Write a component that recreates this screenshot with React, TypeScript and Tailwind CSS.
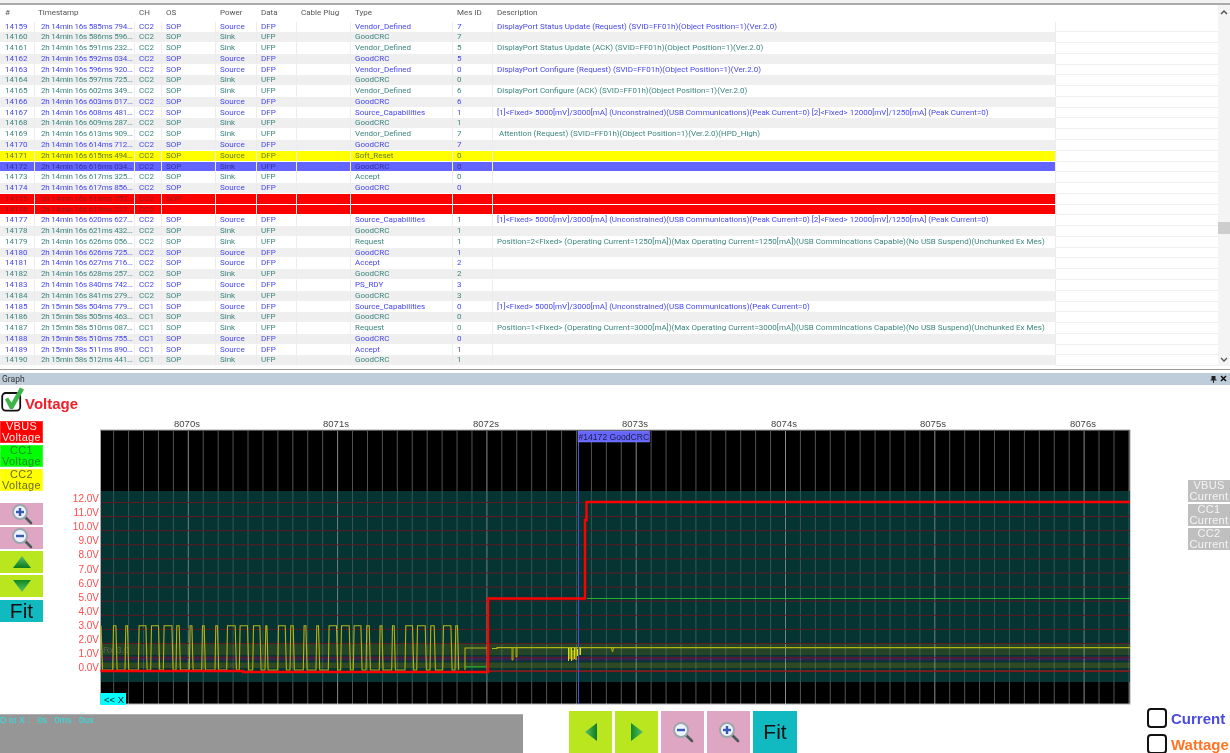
import React from 'react';

type Row = {
  id: number;
  time: string;
  ch?: string;
  os?: string;
  side?: 'Source' | 'Sink';
  type?: string;
  mes?: number;
  desc?: string;
  mark?: 'yellow' | 'blue' | 'red';
};

const caps12 = '[1]<Fixed> 5000[mV]/3000[mA] (Unconstrained)(USB Communications)(Peak Current=0) [2]<Fixed> 12000[mV]/1250[mA] (Peak Current=0)';

const rows: Row[] = [
  { id: 14159, time: '2h 14min 16s 585ms 794...', side: 'Source', type: 'Vendor_Defined', mes: 7, desc: 'DisplayPort Status Update (Request) (SVID=FF01h)(Object Position=1)(Ver.2.0)' },
  { id: 14160, time: '2h 14min 16s 586ms 596...', side: 'Sink', type: 'GoodCRC', mes: 7 },
  { id: 14161, time: '2h 14min 16s 591ms 232...', side: 'Sink', type: 'Vendor_Defined', mes: 5, desc: 'DisplayPort Status Update (ACK) (SVID=FF01h)(Object Position=1)(Ver.2.0)' },
  { id: 14162, time: '2h 14min 16s 592ms 034...', side: 'Source', type: 'GoodCRC', mes: 5 },
  { id: 14163, time: '2h 14min 16s 596ms 920...', side: 'Source', type: 'Vendor_Defined', mes: 0, desc: 'DisplayPort Configure (Request) (SVID=FF01h)(Object Position=1)(Ver.2.0)' },
  { id: 14164, time: '2h 14min 16s 597ms 725...', side: 'Sink', type: 'GoodCRC', mes: 0 },
  { id: 14165, time: '2h 14min 16s 602ms 349...', side: 'Sink', type: 'Vendor_Defined', mes: 6, desc: 'DisplayPort Configure (ACK) (SVID=FF01h)(Object Position=1)(Ver.2.0)' },
  { id: 14166, time: '2h 14min 16s 603ms 017...', side: 'Source', type: 'GoodCRC', mes: 6 },
  { id: 14167, time: '2h 14min 16s 608ms 481...', side: 'Source', type: 'Source_Capabilities', mes: 1, desc: caps12 },
  { id: 14168, time: '2h 14min 16s 609ms 287...', side: 'Sink', type: 'GoodCRC', mes: 1 },
  { id: 14169, time: '2h 14min 16s 613ms 909...', side: 'Sink', type: 'Vendor_Defined', mes: 7, desc: '\u00a0Attention (Request) (SVID=FF01h)(Object Position=1)(Ver.2.0)(HPD_High)' },
  { id: 14170, time: '2h 14min 16s 614ms 712...', side: 'Source', type: 'GoodCRC', mes: 7 },
  { id: 14171, time: '2h 14min 16s 615ms 494...', side: 'Source', type: 'Soft_Reset', mes: 0, mark: 'yellow' },
  { id: 14172, time: '2h 14min 16s 616ms 034...', side: 'Sink', type: 'GoodCRC', mes: 0, mark: 'blue' },
  { id: 14173, time: '2h 14min 16s 617ms 325...', side: 'Sink', type: 'Accept', mes: 0 },
  { id: 14174, time: '2h 14min 16s 617ms 856...', side: 'Source', type: 'GoodCRC', mes: 0 },
  { id: 14175, time: '2h 14min 16s 618ms 752...', ch: 'CC2', os: 'SOP', mark: 'red' },
  { id: 14176, time: '2h 14min 16s 619ms 227...', ch: 'CC2', os: '', mark: 'red' },
  { id: 14177, time: '2h 14min 16s 620ms 627...', side: 'Source', type: 'Source_Capabilities', mes: 1, desc: caps12 },
  { id: 14178, time: '2h 14min 16s 621ms 432...', side: 'Sink', type: 'GoodCRC', mes: 1 },
  { id: 14179, time: '2h 14min 16s 626ms 056...', side: 'Sink', type: 'Request', mes: 1, desc: 'Position=2<Fixed> (Operating Current=1250[mA])(Max Operating Current=1250[mA])(USB Commincations Capable)(No USB Suspend)(Unchunked Ex Mes)' },
  { id: 14180, time: '2h 14min 16s 626ms 725...', side: 'Source', type: 'GoodCRC', mes: 1 },
  { id: 14181, time: '2h 14min 16s 627ms 716...', side: 'Source', type: 'Accept', mes: 2 },
  { id: 14182, time: '2h 14min 16s 628ms 257...', side: 'Sink', type: 'GoodCRC', mes: 2 },
  { id: 14183, time: '2h 14min 16s 840ms 742...', side: 'Source', type: 'PS_RDY', mes: 3 },
  { id: 14184, time: '2h 14min 16s 841ms 279...', side: 'Sink', type: 'GoodCRC', mes: 3 },
  { id: 14185, time: '2h 15min 58s 504ms 779...', ch: 'CC1', side: 'Source', type: 'Source_Capabilities', mes: 0, desc: '[1]<Fixed> 5000[mV]/3000[mA] (Unconstrained)(USB Communications)(Peak Current=0)' },
  { id: 14186, time: '2h 15min 58s 505ms 463...', ch: 'CC1', side: 'Sink', type: 'GoodCRC', mes: 0 },
  { id: 14187, time: '2h 15min 58s 510ms 087...', ch: 'CC1', side: 'Sink', type: 'Request', mes: 0, desc: 'Position=1<Fixed> (Operating Current=3000[mA])(Max Operating Current=3000[mA])(USB Commincations Capable)(No USB Suspend)(Unchunked Ex Mes)' },
  { id: 14188, time: '2h 15min 58s 510ms 755...', ch: 'CC1', side: 'Source', type: 'GoodCRC', mes: 0 },
  { id: 14189, time: '2h 15min 58s 511ms 890...', ch: 'CC1', side: 'Source', type: 'Accept', mes: 1 },
  { id: 14190, time: '2h 15min 58s 512ms 441...', ch: 'CC1', side: 'Sink', type: 'GoodCRC', mes: 1 },
];

const cols = 'grid grid-cols-[35px_100px_27px_54px_41px_40px_54px_102px_40px_563px_162px]';

const Cell = ({ children, className = '' }: { children?: React.ReactNode; className?: string }) => (
  <div className={`overflow-hidden whitespace-nowrap border-r border-b border-r-[#ececec] border-b-white leading-[10px] ${className}`}>{children}</div>
);

const TableRow = ({ row }: { row: Row }) => {
  const even = row.id % 2 === 0;
  let bg = even ? 'bg-[#efefef]' : 'bg-white';
  let text = row.side === 'Source' ? 'text-[#4646f0]' : 'text-[#3c8580]';
  if (row.mark === 'yellow') { bg = 'bg-[#ffff00]'; text = 'text-[#5c7a30]'; }
  if (row.mark === 'blue') { bg = 'bg-[#6464ff]'; text = 'text-[#33339c]'; }
  if (row.mark === 'red') { bg = 'bg-[#ff0000]'; text = 'text-[#8e1c1c]'; }
  return (
    <div className={`${cols} h-[10.77px] ${text}`}>
      <Cell className={`${bg} pl-[5px]`}>{row.id}</Cell>
      <Cell className={`${bg} pl-[6px] tracking-[-0.2px]`}>{row.time}</Cell>
      <Cell className={`${bg} pl-[4px]`}>{row.ch ?? 'CC2'}</Cell>
      <Cell className={`${bg} pl-[4px]`}>{row.os ?? 'SOP'}</Cell>
      <Cell className={`${bg} pl-[4px]`}>{row.side}</Cell>
      <Cell className={`${bg} pl-[4px]`}>{row.side ? (row.side === 'Source' ? 'DFP' : 'UFP') : ''}</Cell>
      <Cell className={bg} />
      <Cell className={`${bg} pl-[4px]`}>{row.type}</Cell>
      <Cell className={`${bg} pl-[4px]`}>{row.mes}</Cell>
      <Cell className={`${bg} pl-[4px]`}>{row.desc}</Cell>
      <div className="bg-white border-b border-[#f0f0f0]" />
    </div>
  );
};

const Magnifier = ({ plus }: { plus: boolean }) => (
  <svg width="22" height="22" viewBox="0 0 22 22">
    <line x1="13.5" y1="13.5" x2="20" y2="20" stroke="#4a5a58" strokeWidth="2.6" strokeLinecap="round" />
    <circle cx="9" cy="9" r="7" fill="#eef3fb" stroke="#9aa7ad" strokeWidth="2" />
    <rect x="5" y="7.8" width="8" height="2.4" fill="#3858b8" />
    {plus && <rect x="7.8" y="5" width="2.4" height="8" fill="#3858b8" />}
  </svg>
);

const Triangle = ({ dir }: { dir: 'up' | 'down' | 'left' | 'right' }) => {
  const points = {
    up: '11,1 20,13 2,13',
    down: '2,1 20,1 11,13',
    left: '13,1 13,19 1,10',
    right: '1,1 1,19 13,10',
  }[dir];
  const vertical = dir === 'up' || dir === 'down';
  return (
    <svg width={vertical ? 22 : 14} height={vertical ? 14 : 20} viewBox={vertical ? '0 0 22 14' : '0 0 14 20'}>
      <defs>
        <linearGradient id={`tri-${dir}`} x1="0" y1="0" x2={vertical ? '0' : '1'} y2={vertical ? '1' : '0'}>
          <stop offset="0" stopColor={dir === 'down' || dir === 'right' ? '#0e8a1e' : '#5cc06a'} />
          <stop offset="1" stopColor={dir === 'down' || dir === 'right' ? '#5cc06a' : '#0e7a1c'} />
        </linearGradient>
      </defs>
      <polygon points={points} fill={`url(#tri-${dir})`} />
    </svg>
  );
};

const CheckedBox = () => (
  <svg width="24" height="26" viewBox="0 0 24 26" className="shrink-0">
    <rect x="1.2" y="7" width="18" height="17.6" rx="3.5" fill="white" stroke="#111" strokeWidth="1.8" />
    <path d="M4 13.5 L7 11.5 L10.5 16.5 L19 1.5 L23 3.5 L12 23 L9 23 Z" fill="#3cb44a" />
  </svg>
);

const pulses: [number, number][] = [
  [38, 50], [75, 85], [115, 140], [152, 178], [190, 218], [228, 240], [268, 278], [305, 315], [345, 355], [380, 408],
  [418, 445], [458, 482], [495, 503], [533, 558], [570, 582], [610, 620], [648, 658], [685, 712], [722, 750], [760, 785],
  [798, 810], [838, 848], [875, 885], [915, 940], [950, 978], [990, 1005], [1028, 1055], [1065, 1075],
];

const wave = () => {
  const hi = 625.7;
  const lo = 670;
  let d = `M101 ${hi} L102.5 ${lo}`;
  for (const [a, b] of pulses) {
    const x1 = 100 + a / 3;
    const x2 = 100 + b / 3;
    d += ` L${x1.toFixed(1)} ${lo} L${(x1 + 0.8).toFixed(1)} ${hi} L${(x2 - 0.8).toFixed(1)} ${hi} L${(x2 + 0.4).toFixed(1)} ${lo}`;
  }
  return d;
};

const gridX: { x: number; major: boolean }[] = [];
for (let k = -5; k < 64; k++) {
  gridX.push({ x: 188.3 + k * 14.93, major: k % 10 === 0 });
}
const volts = Array.from({ length: 13 }, (_, i) => 12 - i);
const ticks = [[187, '8070s'], [336, '8071s'], [486, '8072s'], [635, '8073s'], [784, '8074s'], [933, '8075s'], [1083, '8076s']] as const;

const Chart = () => (
  <svg width="1090" height="288" viewBox="44 417 1090 288" className="block shrink-0 font-['Liberation_Sans',sans-serif]">
    <rect x="100.5" y="430" width="1029.5" height="274" fill="#000" stroke="#aaa" strokeWidth="1" />
    <rect x="101" y="491" width="1029" height="191" fill="#063432" />
    {/* bands behind the traces */}
    <rect x="101" y="643" width="1029" height="12" fill="#6d6a10" opacity="0.3" />
    <rect x="101" y="656.5" width="1029" height="4" fill="#6a1470" opacity="0.5" />
    <rect x="101" y="662.5" width="1029" height="5.5" fill="#6d6a10" opacity="0.4" />
    {gridX.map(g => (
      <g key={g.x}>
        <line x1={g.x} x2={g.x} y1="431" y2="491" stroke="#fff" strokeOpacity={g.major ? 0.55 : 0.33} />
        <line x1={g.x} x2={g.x} y1="491" y2="682" stroke="#fff" strokeOpacity={g.major ? 0.4 : 0.18} />
        <line x1={g.x} x2={g.x} y1="682" y2="704" stroke="#fff" strokeOpacity={g.major ? 0.55 : 0.33} />
      </g>
    ))}
    {volts.map(v => {
      const y = 502.5 + (12 - v) * 14.1;
      return (
        <g key={v}>
          <line x1="101" x2="1130" y1={y} y2={y} stroke="#5e1a20" strokeWidth="1" />
          <text x="99" y={y - 0.5} textAnchor="end" fontSize="10" fill="#ff4a4a">{v.toFixed(1)}V</text>
        </g>
      );
    })}
    {ticks.map(([x, label]) => (
      <text key={label} x={x} y="427" textAnchor="middle" fontSize="9.5" fill="#444">{label}</text>
    ))}
    <text x="103" y="653" fontSize="9" fill="#888" opacity="0.45">Rx 3.0</text>

    <path d="M488 671 H1130" stroke="#c01414" strokeWidth="1.2" fill="none" />
    <path d="M587 598.5 H1130" stroke="#22b030" strokeWidth="1.2" fill="none" />
    <path d="M465 666.8 H488" stroke="#20b030" strokeWidth="1.2" fill="none" />
    <path d={wave()} stroke="#b4b414" strokeWidth="1.1" fill="none" />
    <path d="M465 670 V648 H488 M492 648.5 H497 V647.6 H1130" stroke="#b4b414" strokeWidth="1.1" fill="none" />
    <path d="M512 648 V660 H513 V648 M516 648 V657 H517 V648" stroke="#a8a810" strokeWidth="1" fill="none" />
    <path d="M568.5 648 V661 M570 648 V659 M571.5 648 V661 M573 650 V660 M574.5 648 V659 M576 648 V660 M577.5 649 V656 M579 648 V655 M580.5 648 V655" stroke="#e0e000" strokeWidth="1" fill="none" />
    <path d="M611.5 648 L612.5 652 L613.5 648" stroke="#b4b414" strokeWidth="1" fill="none" />

    <line x1="578.5" x2="578.5" y1="431" y2="704" stroke="#4454d0" strokeWidth="1" />
    <path d="M100.5 671 H243 V672 H488 V598.5 H585 V520 H586.5 V502 H1130" stroke="#f00" strokeWidth="2.4" fill="none" />

    <rect x="578" y="431" width="71.5" height="11" fill="#6666ff" stroke="#8a8aff" strokeWidth="0.5" />
    <text x="578.5" y="440" fontSize="8.6" fill="#20204a">#14172 GoodCRC</text>
    <rect x="100.5" y="693" width="25.5" height="12" fill="#00ffff" />
    <text x="104" y="702.5" fontSize="9.5" fill="#222">{'<< X'}</text>
  </svg>
);

const sideLabel = "w-[43px] h-[22px] flex flex-col items-center justify-center text-[11px] leading-[10.5px] tracking-[0.3px] border border-white/20";

export default function App() {
  return (
    <div className="w-[1230px] h-[753px] overflow-hidden bg-white font-['Roboto',sans-serif] blur-[0.3px]">
      <div className="h-[5px] bg-[#f2f2f2] border-b-2 border-[#aaa]" />
      <div className="flex h-[361.2px] text-[8px]">
        <div className="w-[1218px] shrink-0">
          <div className={`${cols} h-[16.6px] items-center text-[#555]`}>
            <div className="pl-[5px]">#</div>
            <div className="pl-[3px]">Timestamp</div>
            <div className="pl-[4px]">CH</div>
            <div className="pl-[4px]">OS</div>
            <div className="pl-[4px]">Power</div>
            <div className="pl-[4px]">Data</div>
            <div className="pl-[4px]">Cable Plug</div>
            <div className="pl-[4px]">Type</div>
            <div className="pl-[4px]">Mes ID</div>
            <div className="pl-[4px]">Description</div>
            <div />
          </div>
          {rows.map(r => <TableRow key={r.id} row={r} />)}
        </div>
        <div className="w-[12px] bg-[#f4f4f4] flex flex-col items-center">
          <div className="h-[217px] pt-[4px] leading-none">
            <svg width="8" height="6" viewBox="0 0 8 6"><path d="M1 5 L4 2 L7 5" stroke="#555" strokeWidth="1.5" fill="none" /></svg>
          </div>
          <div className="w-full h-[12px] bg-[#cdcdcd]" />
          <div className="mt-auto mb-[3px] leading-none">
            <svg width="8" height="6" viewBox="0 0 8 6"><path d="M1 1 L4 4 L7 1" stroke="#555" strokeWidth="1.3" fill="none" /></svg>
          </div>
        </div>
      </div>
      <div className="h-[6.8px] pt-[2.4px]">
        <div className="h-[1.5px] bg-[#999]" />
      </div>
      <div className="h-[12px] bg-[#bfcddb] flex items-center pl-[2px] pr-[3px] text-[8.5px] text-[#333]">
        <span>Graph</span>
        <svg className="ml-auto" width="7" height="8" viewBox="0 0 7 8"><path d="M1.5 1 H5.5 V4.5 H6.5 V5.5 H4 V8 H3 V5.5 H.5 V4.5 H1.5 Z" fill="#222" /></svg>
        <svg className="ml-[3px]" width="7" height="7" viewBox="0 0 7 7"><path d="M1 1 L6 6 M6 1 L1 6" stroke="#111" strokeWidth="1.5" /></svg>
      </div>

      <div className="h-[32px] flex items-start pl-[1px] pt-[1px] font-['Liberation_Sans',sans-serif]">
        <CheckedBox />
        <span className="mt-[10px] text-[15px] leading-[15px] font-bold text-[#f0202a]">Voltage</span>
      </div>

      <div className="flex h-[288px] font-['Liberation_Sans',sans-serif]">
        <div className="w-[44px] shrink-0 pt-[4px] flex flex-col gap-[2px]">
          <div className={`${sideLabel} bg-[#ff0000] text-[#ffe8e8]`}><span>VBUS</span><span>Voltage</span></div>
          <div className={`${sideLabel} bg-[#00ff00] text-[#1f8a30]`}><span>CC1</span><span>Voltage</span></div>
          <div className={`${sideLabel} bg-[#ffff00] text-[#6a6a20]`}><span>CC2</span><span>Voltage</span></div>
          <div className="h-[8px]" />
          <div className="w-[43px] h-[22px] bg-[#dfa6c4] flex items-center justify-center"><Magnifier plus /></div>
          <div className="w-[43px] h-[22px] bg-[#dfa6c4] flex items-center justify-center"><Magnifier plus={false} /></div>
          <div className="w-[43px] h-[22px] bg-[#b9e61e] flex items-center justify-center"><Triangle dir="up" /></div>
          <div className="w-[43px] h-[22px] bg-[#b9e61e] flex items-center justify-center"><Triangle dir="down" /></div>
          <div className="w-[43px] h-[22px] mt-[1px] bg-[#10bac0] flex items-center justify-center text-[21px] text-[#111]">Fit</div>
        </div>
        <Chart />
        <div className="ml-auto w-[42px] pt-[63px] flex flex-col gap-[2px] text-[#f4f4f4] text-[11px] leading-[10.5px] tracking-[0.3px] text-center">
          <div className="h-[22px] bg-[#bfbfbf] flex flex-col justify-center"><span>VBUS</span><span>Current</span></div>
          <div className="h-[22px] bg-[#bfbfbf] flex flex-col justify-center"><span>CC1</span><span>Current</span></div>
          <div className="h-[22px] bg-[#bfbfbf] flex flex-col justify-center"><span>CC2</span><span>Current</span></div>
        </div>
      </div>

      <div className="flex h-[48px] font-['Liberation_Sans',sans-serif]">
        <div className="w-[523px] mt-[9px] bg-[#969696] border-t border-[#b0b0b0] text-[9px] leading-[10px] text-[#30e0e0] whitespace-pre">D to X :   0s   0ms   0us</div>
        <div className="ml-[46px] mt-[6px] flex gap-[3px]">
          <div className="w-[43px] h-[42px] bg-[#b9e61e] flex items-center justify-center"><Triangle dir="left" /></div>
          <div className="w-[43px] h-[42px] bg-[#b9e61e] flex items-center justify-center"><Triangle dir="right" /></div>
          <div className="w-[43px] h-[42px] bg-[#dfa6c4] flex items-center justify-center"><Magnifier plus={false} /></div>
          <div className="w-[43px] h-[42px] bg-[#dfa6c4] flex items-center justify-center"><Magnifier plus /></div>
          <div className="w-[44px] h-[42px] bg-[#10bac0] flex items-center justify-center text-[21px] text-[#111]">Fit</div>
        </div>
        <div className="ml-[350px] pt-[3px] flex flex-col gap-[6px] text-[15px] font-bold leading-[15px]">
          <div className="flex items-center h-[20px]">
            <div className="w-[20px] h-[20px] rounded-[4px] border-2 border-[#111]" />
            <span className="ml-[4px] mt-[1px] text-[#4a4ae0]">Current</span>
          </div>
          <div className="flex items-center h-[20px]">
            <div className="w-[20px] h-[20px] rounded-[4px] border-2 border-[#111]" />
            <span className="ml-[4px] mt-[1px] text-[#ff7524]">Wattage</span>
          </div>
        </div>
      </div>
    </div>
  );
}
